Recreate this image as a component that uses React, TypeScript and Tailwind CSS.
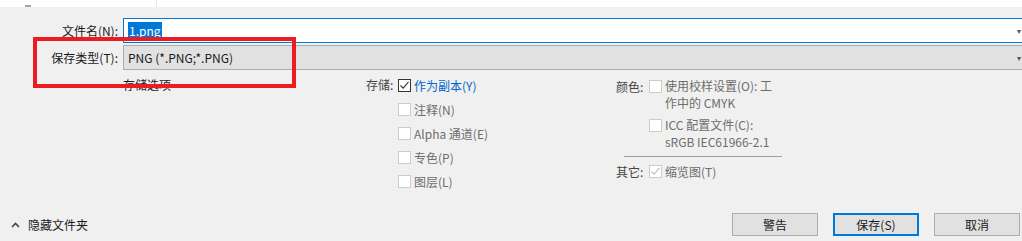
import React from 'react';

function Box({ state }: { state: 'off' | 'on' | 'dim' }) {
  const border = state === 'on' ? 'border-[#333333]' : 'border-[#cccccc]';
  const stroke = state === 'on' ? '#333333' : '#bfbfbf';
  return (
    <span className={`flex h-[13px] w-[13px] shrink-0 items-center justify-center border bg-white ${border}`}>
      {state !== 'off' && (
        <svg width="11" height="11" viewBox="0 0 11 11">
          <path d="M1.5 5.5 L4.2 8.2 L9.5 1.8" fill="none" stroke={stroke} strokeWidth="1.1" />
        </svg>
      )}
    </span>
  );
}

function Row({ state, label, blue }: { state: 'off' | 'on' | 'dim'; label: string; blue?: boolean }) {
  return (
    <div className="flex h-6 items-center gap-[3px]">
      <Box state={state} />
      <span className={blue ? 'text-[#0066cc]' : 'text-[#6d6d6d]'}>{label}</span>
    </div>
  );
}

export default function App() {
  return (
    <div className="relative flex h-[241px] w-[1022px] flex-col overflow-hidden bg-[#f0f0f0] font-['Microsoft_YaHei','Noto_Sans_CJK_SC',sans-serif] text-[12px] leading-[17px] text-[#1a1a1a]">
      {/* top strip */}
      <div className="flex h-[7px] bg-white">
        <div className="w-[157px] border-r border-[#e6e6e6]">
          <div className="ml-[25px] mt-[5px] h-[2px] w-[6px] bg-[#9aa6b8]" />
        </div>
      </div>

      {/* file name */}
      <div className="mt-[11px] flex items-center">
        <span className="w-[123px] pr-[5px] text-right">文件名(N):</span>
        <div className="flex h-[25px] flex-1 items-center border border-r-0 border-[#0078d7] bg-white pl-[4px]">
          <span className="bg-[#0078d7] px-[1px] text-white">1.png</span>
          <span className="ml-auto mr-[1px] text-[8px] text-[#555]">▾</span>
        </div>
      </div>

      {/* save type */}
      <div className="mt-[2px] flex items-center">
        <span className="w-[123px] pr-[5px] text-right">保存类型(T):</span>
        <div className="flex h-[25px] flex-1 items-center border border-r-0 border-[#adadad] bg-[#e1e1e1] pl-[4px]">
          <span>PNG (*.PNG;*.PNG)</span>
          <span className="ml-auto mr-[1px] text-[8px] text-[#555]">▾</span>
        </div>
      </div>

      {/* options */}
      <div className="flex">
        <div className="w-[366px] pl-[123px] pt-[6px]">存储选项</div>

        <div className="flex w-[250px] pt-[3px]">
          <span className="w-[32px] pt-[3px] text-[#444]">存储:</span>
          <div className="flex flex-col">
            <Row state="on" label="作为副本(Y)" blue />
            <Row state="off" label="注释(N)" />
            <Row state="off" label="Alpha 通道(E)" />
            <Row state="off" label="专色(P)" />
            <Row state="off" label="图层(L)" />
          </div>
        </div>

        <div className="flex w-[170px] flex-col pt-[8px]">
          <div className="flex">
            <span className="w-[33px] text-[#444]">颜色:</span>
            <div className="flex flex-col gap-[6px] leading-[16.5px]">
              <div className="flex gap-[3px]">
                <span className="pt-[2px]"><Box state="off" /></span>
                <span className="text-[#6d6d6d]">
                  使用校样设置(O): 工<br />作中的 CMYK
                </span>
              </div>
              <div className="flex gap-[3px]">
                <span className="pt-[2px]"><Box state="off" /></span>
                <span className="text-[#6d6d6d]">
                  ICC 配置文件(C):<br />sRGB IEC61966-2.1
                </span>
              </div>
            </div>
          </div>
          <div className="ml-[8px] mt-[6px] h-px w-[158px] bg-[#a0a0a0]" />
          <div className="mt-[6px] flex items-center">
            <span className="w-[33px] text-[#444]">其它:</span>
            <Box state="dim" />
            <span className="ml-[3px] text-[#6d6d6d]">缩览图(T)</span>
          </div>
        </div>
      </div>

      {/* bottom bar */}
      <div className="mt-auto mb-[5px] flex items-center">
        <div className="ml-[11px] flex items-center gap-[8px]">
          <svg width="9" height="6" viewBox="0 0 9 6">
            <path d="M1 5 L4.5 1.5 L8 5" fill="none" stroke="#444" strokeWidth="1.6" />
          </svg>
          <span>隐藏文件夹</span>
        </div>
        <div className="ml-auto mr-[2px] flex gap-[15px]">
          <button className="h-[23px] w-[86px] border border-[#adadad] bg-[#e1e1e1]">警告</button>
          <button className="h-[23px] w-[86px] border-2 border-[#0078d7] bg-[#e1e1e1]">保存(S)</button>
          <button className="h-[23px] w-[86px] border border-[#adadad] bg-[#e1e1e1]">取消</button>
        </div>
      </div>

      {/* red annotation */}
      <div className="pointer-events-none absolute left-[33px] top-[37px] h-[51px] w-[263px] border-4 border-[#ed1c24]" />
    </div>
  );
}
